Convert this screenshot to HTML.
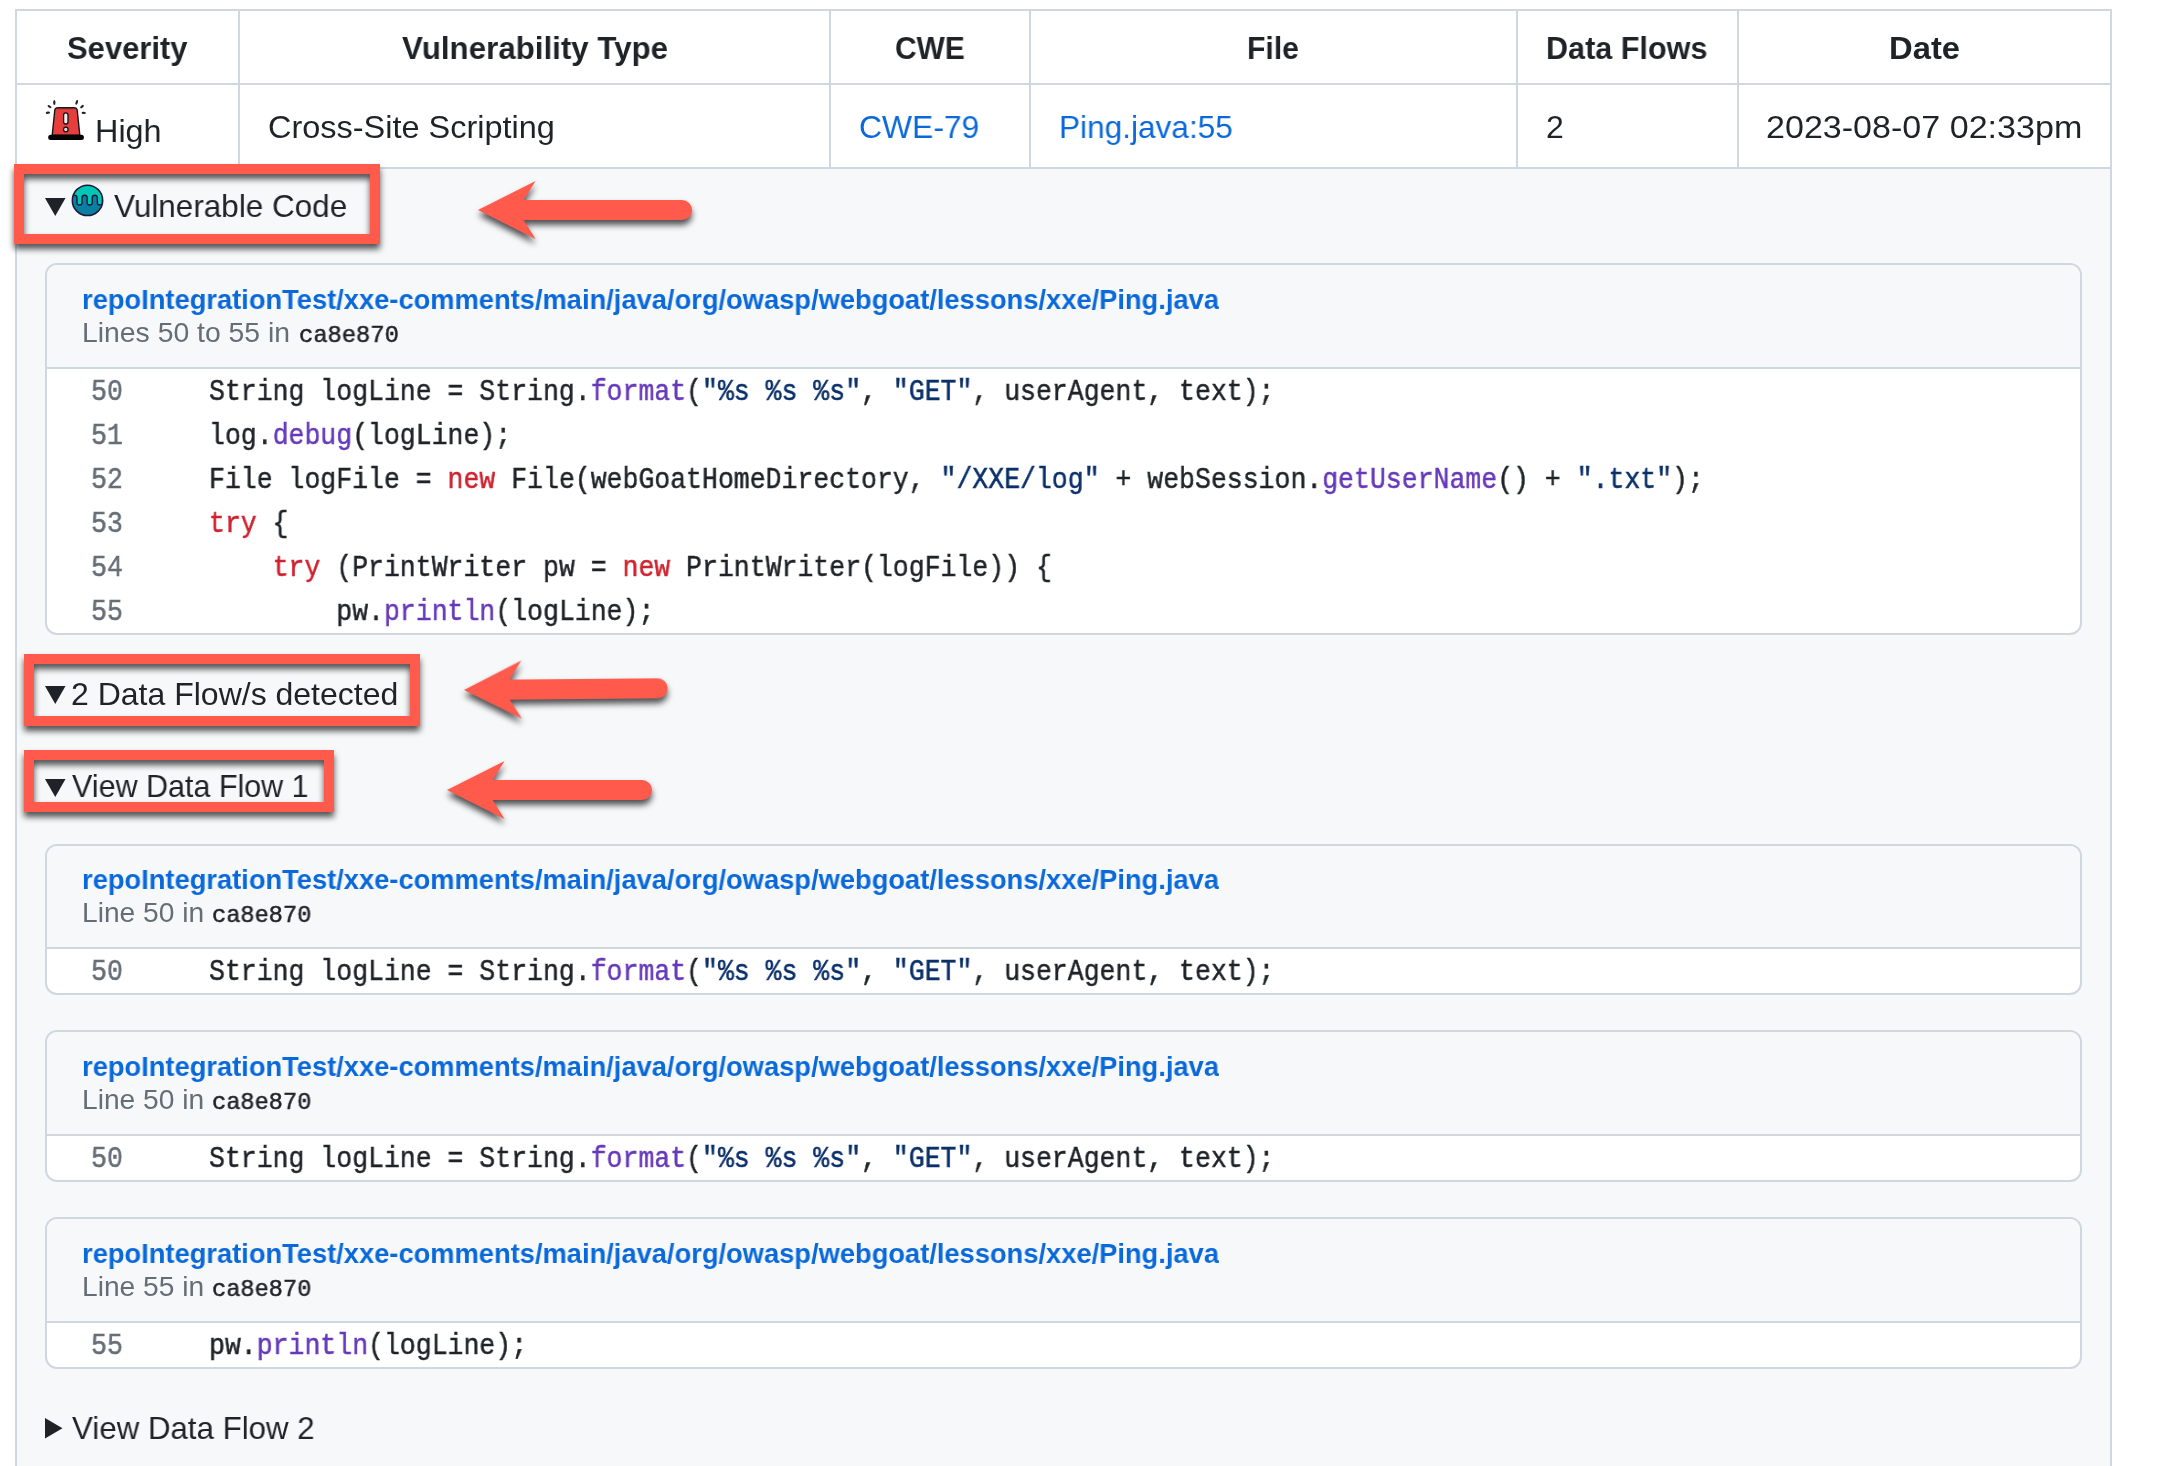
<!DOCTYPE html><html><head><meta charset="utf-8"><style>
html,body{margin:0;padding:0;background:#fff;width:2170px;height:1466px;overflow:hidden;position:relative}
.a{position:absolute;white-space:pre;margin:0;will-change:transform}
.s{font-family:"Liberation Sans",sans-serif}
.m{font-family:"Liberation Mono",monospace;-webkit-text-stroke:0.5px currentColor}
</style></head><body>
<div class="a" style="left:17px;top:169px;width:2093px;height:1297px;background:#f6f8fa"></div>
<div class="a" style="left:15px;top:9px;width:2097px;height:2px;background:#d0d7de"></div>
<div class="a" style="left:15px;top:83px;width:2097px;height:2px;background:#d0d7de"></div>
<div class="a" style="left:15px;top:167px;width:2097px;height:2px;background:#d0d7de"></div>
<div class="a" style="left:15px;top:9px;width:2px;height:1466px;background:#d0d7de"></div>
<div class="a" style="left:2110px;top:9px;width:2px;height:1466px;background:#d0d7de"></div>
<div class="a" style="left:238px;top:9px;width:2px;height:160px;background:#d0d7de"></div>
<div class="a" style="left:829px;top:9px;width:2px;height:160px;background:#d0d7de"></div>
<div class="a" style="left:1029px;top:9px;width:2px;height:160px;background:#d0d7de"></div>
<div class="a" style="left:1516px;top:9px;width:2px;height:160px;background:#d0d7de"></div>
<div class="a" style="left:1737px;top:9px;width:2px;height:160px;background:#d0d7de"></div>
<div class="a" style="left:45px;top:263px;width:2033px;height:368px;border:2px solid #d0d7de;border-radius:12px;background:#fff;overflow:hidden"><div style="position:absolute;left:0;top:0;right:0;height:102px;background:#f6f8fa;border-bottom:2px solid #d0d7de"></div></div>
<div class="a" style="left:45px;top:844px;width:2033px;height:147px;border:2px solid #d0d7de;border-radius:12px;background:#fff;overflow:hidden"><div style="position:absolute;left:0;top:0;right:0;height:101px;background:#f6f8fa;border-bottom:2px solid #d0d7de"></div></div>
<div class="a" style="left:45px;top:1030px;width:2033px;height:148px;border:2px solid #d0d7de;border-radius:12px;background:#fff;overflow:hidden"><div style="position:absolute;left:0;top:0;right:0;height:102px;background:#f6f8fa;border-bottom:2px solid #d0d7de"></div></div>
<div class="a" style="left:45px;top:1217px;width:2033px;height:148px;border:2px solid #d0d7de;border-radius:12px;background:#fff;overflow:hidden"><div style="position:absolute;left:0;top:0;right:0;height:102px;background:#f6f8fa;border-bottom:2px solid #d0d7de"></div></div>
<div class="a s" style="left:67.00px;top:32.00px;font-size:32px;line-height:32px;font-weight:700;color:#1f2328;transform:scaleX(0.9675);transform-origin:0 0">Severity</div>
<div class="a s" style="left:402.20px;top:32.00px;font-size:32px;line-height:32px;font-weight:700;color:#1f2328;transform:scaleX(0.9779);transform-origin:0 0">Vulnerability Type</div>
<div class="a s" style="left:894.80px;top:32.00px;font-size:32px;line-height:32px;font-weight:700;color:#1f2328;transform:scaleX(0.9356);transform-origin:0 0">CWE</div>
<div class="a s" style="left:1247.00px;top:32.00px;font-size:32px;line-height:32px;font-weight:700;color:#1f2328;transform:scaleX(0.9423);transform-origin:0 0">File</div>
<div class="a s" style="left:1546.40px;top:32.00px;font-size:32px;line-height:32px;font-weight:700;color:#1f2328;transform:scaleX(0.9554);transform-origin:0 0">Data Flows</div>
<div class="a s" style="left:1888.60px;top:32.00px;font-size:32px;line-height:32px;font-weight:700;color:#1f2328;transform:scaleX(1.0242);transform-origin:0 0">Date</div>
<div class="a s" style="left:94.80px;top:115.00px;font-size:32px;line-height:32px;font-weight:400;color:#1f2328;transform:scaleX(1.0115);transform-origin:0 0">High</div>
<div class="a s" style="left:268.00px;top:111.00px;font-size:32px;line-height:32px;font-weight:400;color:#1f2328;transform:scaleX(1.0143);transform-origin:0 0">Cross-Site Scripting</div>
<div class="a s" style="left:859.40px;top:111.00px;font-size:32px;line-height:32px;font-weight:400;color:#0969da;transform:scaleX(0.9957);transform-origin:0 0">CWE-79</div>
<div class="a s" style="left:1058.80px;top:111.00px;font-size:32px;line-height:32px;font-weight:400;color:#0969da;transform:scaleX(0.9872);transform-origin:0 0">Ping.java:55</div>
<div class="a s" style="left:1546.00px;top:111.00px;font-size:32px;line-height:32px;font-weight:400;color:#1f2328;transform:scaleX(1.0000);transform-origin:0 0">2</div>
<div class="a s" style="left:1766.20px;top:110.50px;font-size:32px;line-height:32px;font-weight:400;color:#1f2328;transform:scaleX(1.0645);transform-origin:0 0">2023-08-07 02:33pm</div>
<div class="a s" style="left:114.00px;top:190.00px;font-size:32px;line-height:32px;font-weight:400;color:#1f2328;transform:scaleX(0.9831);transform-origin:0 0">Vulnerable Code</div>
<div class="a s" style="left:70.90px;top:678.00px;font-size:32px;line-height:32px;font-weight:400;color:#1f2328;transform:scaleX(0.9994);transform-origin:0 0">2 Data Flow/s detected</div>
<div class="a s" style="left:72.20px;top:770.00px;font-size:32px;line-height:32px;font-weight:400;color:#1f2328;transform:scaleX(0.9526);transform-origin:0 0">View Data Flow 1</div>
<div class="a s" style="left:71.90px;top:1412.00px;font-size:32px;line-height:32px;font-weight:400;color:#1f2328;transform:scaleX(0.9769);transform-origin:0 0">View Data Flow 2</div>
<div class="a s" style="left:81.50px;top:286.00px;font-size:28px;line-height:28px;font-weight:700;color:#0969da;transform:scaleX(0.9747);transform-origin:0 0">repoIntegrationTest/xxe-comments/main/java/org/owasp/webgoat/lessons/xxe/Ping.java</div>
<div class="a s" style="left:82.10px;top:319.00px;font-size:28px;line-height:28px;font-weight:400;color:#656d76;transform:scaleX(1.0124);transform-origin:0 0">Lines 50 to 55 in</div>
<div class="a m" style="left:298.60px;top:324.00px;font-size:24px;line-height:24px;font-weight:400;color:#1f2328;transform:scaleX(0.9899);transform-origin:0 0">ca8e870</div>
<div class="a s" style="left:81.50px;top:866.00px;font-size:28px;line-height:28px;font-weight:700;color:#0969da;transform:scaleX(0.9747);transform-origin:0 0">repoIntegrationTest/xxe-comments/main/java/org/owasp/webgoat/lessons/xxe/Ping.java</div>
<div class="a s" style="left:82.10px;top:899.00px;font-size:28px;line-height:28px;font-weight:400;color:#656d76;transform:scaleX(1.0059);transform-origin:0 0">Line 50 in</div>
<div class="a m" style="left:212.20px;top:904.00px;font-size:24px;line-height:24px;font-weight:400;color:#1f2328;transform:scaleX(0.9848);transform-origin:0 0">ca8e870</div>
<div class="a s" style="left:81.50px;top:1053.00px;font-size:28px;line-height:28px;font-weight:700;color:#0969da;transform:scaleX(0.9747);transform-origin:0 0">repoIntegrationTest/xxe-comments/main/java/org/owasp/webgoat/lessons/xxe/Ping.java</div>
<div class="a s" style="left:82.10px;top:1086.00px;font-size:28px;line-height:28px;font-weight:400;color:#656d76;transform:scaleX(1.0059);transform-origin:0 0">Line 50 in</div>
<div class="a m" style="left:212.20px;top:1091.00px;font-size:24px;line-height:24px;font-weight:400;color:#1f2328;transform:scaleX(0.9848);transform-origin:0 0">ca8e870</div>
<div class="a s" style="left:81.50px;top:1240.00px;font-size:28px;line-height:28px;font-weight:700;color:#0969da;transform:scaleX(0.9747);transform-origin:0 0">repoIntegrationTest/xxe-comments/main/java/org/owasp/webgoat/lessons/xxe/Ping.java</div>
<div class="a s" style="left:82.10px;top:1273.00px;font-size:28px;line-height:28px;font-weight:400;color:#656d76;transform:scaleX(1.0059);transform-origin:0 0">Line 55 in</div>
<div class="a m" style="left:212.20px;top:1278.00px;font-size:24px;line-height:24px;font-weight:400;color:#1f2328;transform:scaleX(0.9848);transform-origin:0 0">ca8e870</div>
<div class="a m" style="left:90.5px;top:378px;font-size:29px;line-height:29px;color:#656d76;transform:scaleX(0.9138);transform-origin:0 0">50</div>
<div class="a m" style="left:208.5px;top:378px;font-size:29px;line-height:29px;color:#1f2328;transform:scaleX(0.9138);transform-origin:0 0">String logLine = String.<span style="color:#6639ba">format</span>(<span style="color:#0a3069">&quot;%s %s %s&quot;</span>, <span style="color:#0a3069">&quot;GET&quot;</span>, userAgent, text);</div>
<div class="a m" style="left:90.5px;top:422px;font-size:29px;line-height:29px;color:#656d76;transform:scaleX(0.9138);transform-origin:0 0">51</div>
<div class="a m" style="left:208.5px;top:422px;font-size:29px;line-height:29px;color:#1f2328;transform:scaleX(0.9138);transform-origin:0 0">log.<span style="color:#6639ba">debug</span>(logLine);</div>
<div class="a m" style="left:90.5px;top:466px;font-size:29px;line-height:29px;color:#656d76;transform:scaleX(0.9138);transform-origin:0 0">52</div>
<div class="a m" style="left:208.5px;top:466px;font-size:29px;line-height:29px;color:#1f2328;transform:scaleX(0.9138);transform-origin:0 0">File logFile = <span style="color:#cf222e">new</span> File(webGoatHomeDirectory, <span style="color:#0a3069">&quot;/XXE/log&quot;</span> + webSession.<span style="color:#6639ba">getUserName</span>() + <span style="color:#0a3069">&quot;.txt&quot;</span>);</div>
<div class="a m" style="left:90.5px;top:510px;font-size:29px;line-height:29px;color:#656d76;transform:scaleX(0.9138);transform-origin:0 0">53</div>
<div class="a m" style="left:208.5px;top:510px;font-size:29px;line-height:29px;color:#1f2328;transform:scaleX(0.9138);transform-origin:0 0"><span style="color:#cf222e">try</span> {</div>
<div class="a m" style="left:90.5px;top:554px;font-size:29px;line-height:29px;color:#656d76;transform:scaleX(0.9138);transform-origin:0 0">54</div>
<div class="a m" style="left:208.5px;top:554px;font-size:29px;line-height:29px;color:#1f2328;transform:scaleX(0.9138);transform-origin:0 0">    <span style="color:#cf222e">try</span> (PrintWriter pw = <span style="color:#cf222e">new</span> PrintWriter(logFile)) {</div>
<div class="a m" style="left:90.5px;top:598px;font-size:29px;line-height:29px;color:#656d76;transform:scaleX(0.9138);transform-origin:0 0">55</div>
<div class="a m" style="left:208.5px;top:598px;font-size:29px;line-height:29px;color:#1f2328;transform:scaleX(0.9138);transform-origin:0 0">        pw.<span style="color:#6639ba">println</span>(logLine);</div>
<div class="a m" style="left:90.5px;top:958px;font-size:29px;line-height:29px;color:#656d76;transform:scaleX(0.9138);transform-origin:0 0">50</div>
<div class="a m" style="left:208.5px;top:958px;font-size:29px;line-height:29px;color:#1f2328;transform:scaleX(0.9138);transform-origin:0 0">String logLine = String.<span style="color:#6639ba">format</span>(<span style="color:#0a3069">&quot;%s %s %s&quot;</span>, <span style="color:#0a3069">&quot;GET&quot;</span>, userAgent, text);</div>
<div class="a m" style="left:90.5px;top:1145px;font-size:29px;line-height:29px;color:#656d76;transform:scaleX(0.9138);transform-origin:0 0">50</div>
<div class="a m" style="left:208.5px;top:1145px;font-size:29px;line-height:29px;color:#1f2328;transform:scaleX(0.9138);transform-origin:0 0">String logLine = String.<span style="color:#6639ba">format</span>(<span style="color:#0a3069">&quot;%s %s %s&quot;</span>, <span style="color:#0a3069">&quot;GET&quot;</span>, userAgent, text);</div>
<div class="a m" style="left:90.5px;top:1332px;font-size:29px;line-height:29px;color:#656d76;transform:scaleX(0.9138);transform-origin:0 0">55</div>
<div class="a m" style="left:208.5px;top:1332px;font-size:29px;line-height:29px;color:#1f2328;transform:scaleX(0.9138);transform-origin:0 0">pw.<span style="color:#6639ba">println</span>(logLine);</div>
<svg class="a" style="left:45px;top:198px" width="21" height="19" viewBox="0 0 21 19"><path d="M0 0H20.5L10.25 18Z" fill="#1f2328"/></svg>
<svg class="a" style="left:45px;top:686px" width="21" height="19" viewBox="0 0 21 19"><path d="M0 0H20.5L10.25 18Z" fill="#1f2328"/></svg>
<svg class="a" style="left:45px;top:778.5px" width="21" height="19" viewBox="0 0 21 19"><path d="M0 0H20.5L10.25 18Z" fill="#1f2328"/></svg>
<svg class="a" style="left:45px;top:1418px" width="18" height="21" viewBox="0 0 18 21"><path d="M0 0V20.5L17.5 10.25Z" fill="#1f2328"/></svg>
<svg class="a" style="left:71px;top:183px" width="34" height="35" viewBox="0 0 34 35">
<defs><clipPath id="cc"><circle cx="16.5" cy="17.4" r="15.2"/></clipPath></defs>
<g clip-path="url(#cc)"><rect x="0" y="0" width="34" height="35" fill="#00c6b5"/>
<path d="M-5 40 L-5 14.85 L0.85 14.85 A2.55 2.55 0 0 1 5.95 14.85 L5.95 19.45 A2.55 2.55 0 0 0 11.05 19.45 L11.05 14.85 A2.55 2.55 0 0 1 16.15 14.85 L16.15 19.45 A2.55 2.55 0 0 0 21.25 19.45 L21.25 14.85 A2.55 2.55 0 0 1 26.35 14.85 L26.35 19.45 A2.55 2.55 0 0 0 31.45 19.45 L31.45 14.85 A2.55 2.55 0 0 1 36.55 14.85 L40 14.85 L40 40 Z" fill="#0a7fa3" stroke="#1c1a3a" stroke-width="1.4"/></g>
<circle cx="16.5" cy="17.4" r="15.2" fill="none" stroke="#1c1a3a" stroke-width="1.5"/></svg>
<svg class="a" style="left:44px;top:98px" width="44" height="44" viewBox="0 0 44 44">
<g fill="#222">
<ellipse cx="10.3" cy="4.4" rx="1.15" ry="2.5"/>
<ellipse cx="5.5" cy="8.6" rx="2.2" ry="1.1" transform="rotate(35 5.5 8.6)"/>
<ellipse cx="3.9" cy="14.65" rx="2.2" ry="1.2" transform="rotate(-7 3.9 14.65)"/>
<ellipse cx="32.7" cy="4.4" rx="1.15" ry="2.5" transform="rotate(18 32.7 4.4)"/>
<ellipse cx="38" cy="8.6" rx="2.2" ry="1.1" transform="rotate(-40 38 8.6)"/>
<ellipse cx="39.75" cy="14.85" rx="2.2" ry="1.2" transform="rotate(5 39.75 14.85)"/>
</g>
<path d="M10.7 13 Q10.8 9.6 14.2 9.6 L29.8 9.6 Q33.2 9.6 33.3 13 L35.8 37.2 L8.2 37.2 Z" fill="#e63d3d" stroke="#151515" stroke-width="1.4"/>
<path d="M13 10.5 L31 10.5" stroke="#6a2a2a" stroke-width="1.3"/>
<rect x="4.2" y="36.8" width="35.7" height="5.2" rx="2.5" fill="#050505"/>
<rect x="19.6" y="14.9" width="4.4" height="11.1" rx="2.2" fill="#eee" stroke="#111" stroke-width="1.3"/>
<circle cx="21.8" cy="31.5" r="2.3" fill="#ddd" stroke="#111" stroke-width="1.3"/>
</svg>
<div class="a" style="left:14px;top:164px;width:346px;height:60px;border:10px solid #ff5a4b;filter:drop-shadow(0 5px 3px rgba(0,0,0,0.68))"></div>
<div class="a" style="left:24px;top:654px;width:376px;height:52px;border:10px solid #ff5a4b;filter:drop-shadow(0 5px 3px rgba(0,0,0,0.68))"></div>
<div class="a" style="left:24px;top:750px;width:290px;height:42px;border:10px solid #ff5a4b;filter:drop-shadow(0 5px 3px rgba(0,0,0,0.68))"></div>
<svg class="a" style="left:472.4px;top:169.7px;overflow:visible;transform:rotate(0deg);transform-origin:6px 40px;filter:drop-shadow(0 5px 3px rgba(0,0,0,0.68))" width="226.10000000000002" height="80" viewBox="0 0 226.10000000000002 80"><path d="M6 40 L63.6 11 L51.6 30 L210.10000000000002 30 A10 10 0 0 1 210.10000000000002 50 L51.6 50 L63.6 69 Z" fill="#ff5a4b"/></svg>
<svg class="a" style="left:458.2px;top:649.7px;overflow:visible;transform:rotate(-0.5deg);transform-origin:6px 40px;filter:drop-shadow(0 5px 3px rgba(0,0,0,0.68))" width="215.7" height="80" viewBox="0 0 215.7 80"><path d="M6 40 L63.6 11 L51.6 30 L199.7 30 A10 10 0 0 1 199.7 50 L51.6 50 L63.6 69 Z" fill="#ff5a4b"/></svg>
<svg class="a" style="left:440.7px;top:749.7px;overflow:visible;transform:rotate(0deg);transform-origin:6px 40px;filter:drop-shadow(0 5px 3px rgba(0,0,0,0.68))" width="217.09999999999997" height="80" viewBox="0 0 217.09999999999997 80"><path d="M6 40 L63.6 11 L51.6 30 L201.09999999999997 30 A10 10 0 0 1 201.09999999999997 50 L51.6 50 L63.6 69 Z" fill="#ff5a4b"/></svg>
</body></html>
